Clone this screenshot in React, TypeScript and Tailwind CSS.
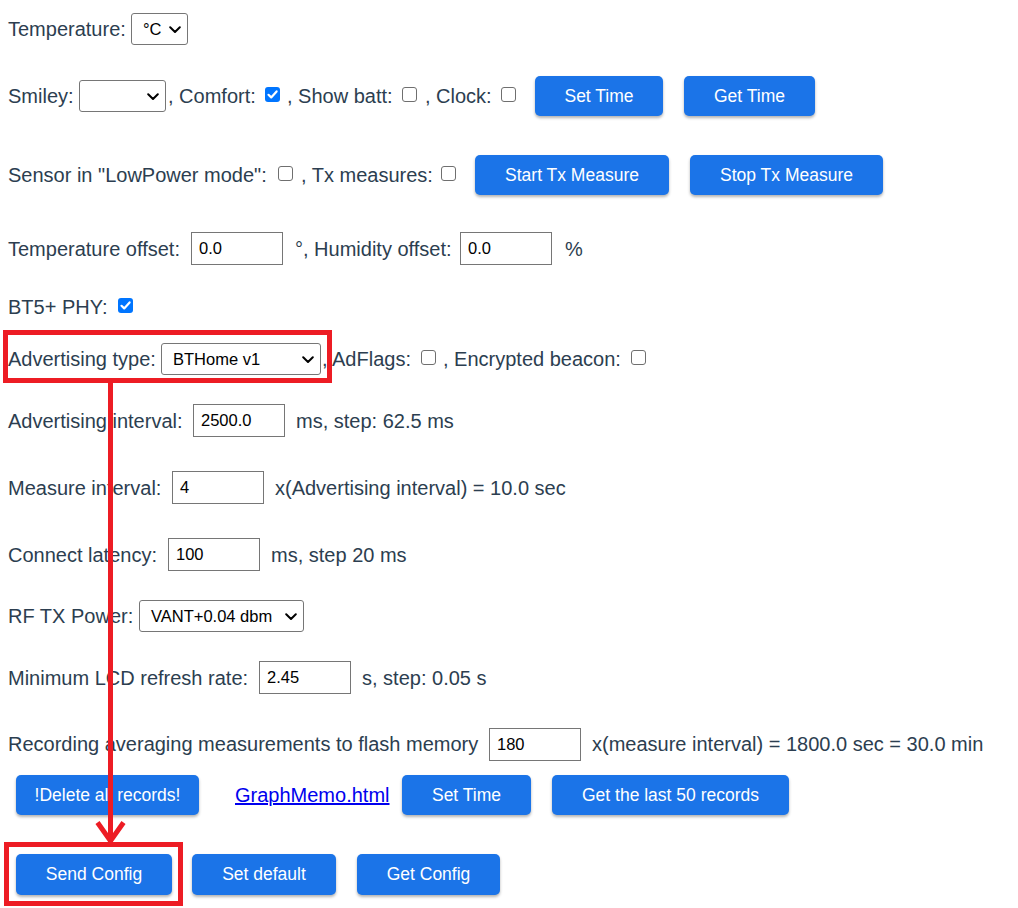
import React from "react";

const BTN =
  "h-[40px] shrink-0 rounded-[5px] bg-[#1b74e8] text-white text-[17.5px] shadow-[0_2px_3px_rgba(0,0,0,0.3)] flex items-center justify-center";

function Label({ w, children }: { w?: string; children: React.ReactNode }) {
  return <span className={`shrink-0 whitespace-pre ${w ?? ""}`}>{children}</span>;
}

function Check({ checked, className = "" }: { checked?: boolean; className?: string }) {
  if (checked) {
    return (
      <span
        className={`mb-[4px] flex h-[15px] w-[15px] shrink-0 items-center justify-center rounded-[3px] bg-[#0075ff] ${className}`}
      >
        <svg width="13" height="13" viewBox="0 0 13 13" fill="none">
          <path d="M2.5 6.8 L5.2 9.4 L10.6 3.4" stroke="white" strokeWidth="2.2" strokeLinecap="round" strokeLinejoin="round" />
        </svg>
      </span>
    );
  }
  return (
    <span
      className={`mb-[4px] h-[15px] w-[15px] shrink-0 rounded-[3px] border border-[#6f6f6f] bg-white ${className}`}
    />
  );
}

function Select({ w, value }: { w: string; value: string }) {
  return (
    <div
      className={`relative flex h-[32px] shrink-0 items-center rounded-[3px] border border-[#767676] bg-white pl-[11px] text-[16.5px] text-black ${w}`}
    >
      <span className="whitespace-pre">{value}</span>
      <svg
        className="absolute right-[6px] top-[12px]"
        width="12"
        height="8"
        viewBox="0 0 12 8"
        fill="none"
      >
        <path d="M1.2 1.3 L6 6 L10.8 1.3" stroke="black" strokeWidth="2" strokeLinecap="round" strokeLinejoin="round" />
      </svg>
    </div>
  );
}

function Input({ value }: { value: string }) {
  return (
    <div className="flex h-[33px] w-[92px] shrink-0 items-center border border-[#767676] bg-white pl-[7px] text-[16.5px] text-black">
      {value}
    </div>
  );
}

const ROW = "flex items-center";

export default function App() {
  return (
    <div className="relative h-[908px] w-[1018px] overflow-hidden bg-white pl-[8px] font-['Liberation_Sans',Arial,sans-serif] text-[20px] text-[#2c3e50]">
      <div className={`${ROW} h-[58px]`}>
        <Label w="w-[123px]">Temperature:</Label>
        <Select w="w-[57px]" value="°C" />
      </div>

      <div className={`${ROW} h-[76px]`}>
        <Label w="w-[71px]">Smiley:</Label>
        <Select w="w-[87px]" value="" />
        <Label w="w-[97px] ml-[2px]">, Comfort:</Label>
        <Check checked />
        <Label w="w-[115px] ml-[7px]">, Show batt:</Label>
        <Check />
        <Label w="w-[76px] ml-[8px]">, Clock:</Label>
        <Check />
        <button className={`${BTN} ml-[19px] w-[128px]`}>Set Time</button>
        <button className={`${BTN} ml-[21px] w-[131px]`}>Get Time</button>
      </div>

      <div className={`${ROW} h-[82px]`}>
        <Label w="w-[270px]">Sensor in "LowPower mode":</Label>
        <Check />
        <Label w="w-[140px] ml-[8px]">, Tx measures:</Label>
        <Check />
        <button className={`${BTN} ml-[19px] w-[194px]`}>Start Tx Measure</button>
        <button className={`${BTN} ml-[21px] w-[193px]`}>Stop Tx Measure</button>
      </div>

      <div className={`${ROW} h-[65px]`}>
        <Label w="w-[183px]">Temperature offset:</Label>
        <Input value="0.0" />
        <Label w="w-[165px] ml-[12px]">°, Humidity offset:</Label>
        <Input value="0.0" />
        <Label w="ml-[13px]">%</Label>
      </div>

      <div className={`${ROW} h-[52px]`}>
        <Label w="w-[110px]">BT5+ PHY:</Label>
        <Check checked />
      </div>

      <div className={`${ROW} h-[52px]`}>
        <Label w="w-[153px]">Advertising type:</Label>
        <Select w="w-[160px]" value="BTHome v1" />
        <Label w="w-[99px] ml-[1px]">, AdFlags:</Label>
        <Check />
        <Label w="w-[188px] ml-[7px]">, Encrypted beacon:</Label>
        <Check />
      </div>

      <div className={`${ROW} h-[71px]`}>
        <Label w="w-[185px]">Advertising interval:</Label>
        <Input value="2500.0" />
        <Label w="ml-[11px]">ms, step: 62.5 ms</Label>
      </div>

      <div className={`${ROW} h-[63px]`}>
        <Label w="w-[164px]">Measure interval:</Label>
        <Input value="4" />
        <Label w="ml-[11px]">x(Advertising interval) = 10.0 sec</Label>
      </div>

      <div className={`${ROW} h-[71px]`}>
        <Label w="w-[160px]">Connect latency:</Label>
        <Input value="100" />
        <Label w="ml-[11px]">ms, step 20 ms</Label>
      </div>

      <div className={`${ROW} h-[52px]`}>
        <Label w="w-[131px]">RF TX Power:</Label>
        <Select w="w-[165px]" value="VANT+0.04 dbm" />
      </div>

      <div className={`${ROW} h-[71px]`}>
        <Label w="w-[251px]">Minimum LCD refresh rate:</Label>
        <Input value="2.45" />
        <Label w="ml-[11px]">s, step: 0.05 s</Label>
      </div>

      <div className={`${ROW} h-[62px]`}>
        <Label w="w-[481px]">Recording averaging measurements to flash memory</Label>
        <Input value="180" />
        <Label w="ml-[11px]">x(measure interval) = 1800.0 sec = 30.0 min</Label>
      </div>

      <div className={`${ROW} h-[40px]`}>
        <button className={`${BTN} ml-[8px] w-[183px]`}>!Delete all records!</button>
        <span className="ml-[36px] w-[167px] shrink-0">
          <a href="#" className="text-[#0000ee] underline">
            GraphMemo.html
          </a>
        </span>
        <button className={`${BTN} w-[129px]`}>Set Time</button>
        <button className={`${BTN} ml-[21px] w-[237px]`}>Get the last 50 records</button>
      </div>

      <div className={`${ROW} mt-[39px]`}>
        <button className={`${BTN} ml-[8px] h-[41px] w-[156px]`}>Send Config</button>
        <button className={`${BTN} ml-[20px] h-[41px] w-[144px]`}>Set default</button>
        <button className={`${BTN} ml-[21px] h-[41px] w-[143px]`}>Get Config</button>
      </div>

      {/* red annotation drawn over the screenshot */}
      <svg
        className="pointer-events-none absolute left-0 top-0"
        width="1018"
        height="908"
        viewBox="0 0 1018 908"
        fill="none"
      >
        <rect x="5.5" y="332.5" width="324" height="48" stroke="#ed1c24" strokeWidth="5" />
        <line x1="110.5" y1="381" x2="110.5" y2="842" stroke="#ed1c24" strokeWidth="5" />
        <path d="M97.5 822.5 L110.5 841 L123.5 822.5" stroke="#ed1c24" strokeWidth="5" strokeLinejoin="miter" />
        <rect x="6.5" y="844.5" width="174" height="59" stroke="#ed1c24" strokeWidth="5" />
      </svg>
    </div>
  );
}
